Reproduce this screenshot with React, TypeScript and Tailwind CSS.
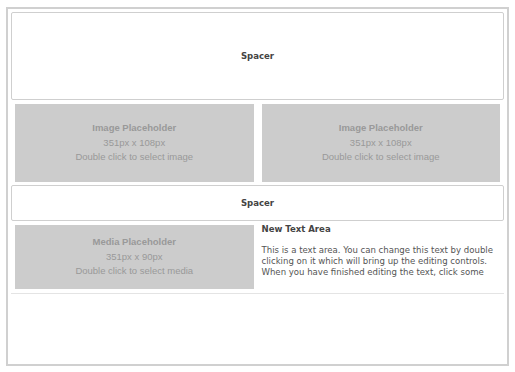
const placeholder = "flex flex-col items-center justify-center bg-[#cccccc] text-[#999999] text-[9.5px] leading-[14.5px] font-['Liberation_Sans',Arial,sans-serif]";

function Spacer({ height }: { height: string }) {
  return (
    <div
      className={`flex items-center justify-center rounded-[2px] border border-[#cfcfcf] bg-white ${height}`}
    >
      <span className="text-[9.5px] font-bold text-[#444] font-['DejaVu_Sans_Condensed','DejaVu_Sans',sans-serif]">Spacer</span>
    </div>
  );
}

export default function App() {
  return (
    <div className="h-[372px] w-[515px] bg-white pl-[6px] pt-[7px]">
      <div className="flex h-[359px] w-[503px] flex-col border-2 border-[#d0d0d0] p-[3px]">
        <Spacer height="h-[88px]" />

        <div className="grid grid-cols-2">
          <div className="px-[4px] pt-[4px] pb-[3px]">
            <div className={`h-[78px] ${placeholder}`}>
              <span className="font-bold">Image Placeholder</span>
              <span>351px x 108px</span>
              <span>Double click to select image</span>
            </div>
          </div>
          <div className="px-[4px] pt-[4px] pb-[3px]">
            <div className={`h-[78px] ${placeholder}`}>
              <span className="font-bold">Image Placeholder</span>
              <span>351px x 108px</span>
              <span>Double click to select image</span>
            </div>
          </div>
        </div>

        <Spacer height="h-[36px]" />

        <div className="grid grid-cols-2 border-b border-[#e4e4e4]">
          <div className="p-[4px]">
            <div className={`h-[64px] ${placeholder}`}>
              <span className="font-bold">Media Placeholder</span>
              <span>351px x 90px</span>
              <span>Double click to select media</span>
            </div>
          </div>
          <div className="px-[4px] pt-[2px] font-['DejaVu_Sans_Condensed','DejaVu_Sans',sans-serif] text-[#555]">
            <div className="text-[9.5px] font-bold leading-[12px] text-[#444]">New Text Area</div>
            <p className="mt-[9px] text-[9.5px] leading-[11px]">
              This is a text area. You can change this text by double clicking on it which will bring up the editing controls. When you have finished editing the text, click some
            </p>
          </div>
        </div>
      </div>
    </div>
  );
}
